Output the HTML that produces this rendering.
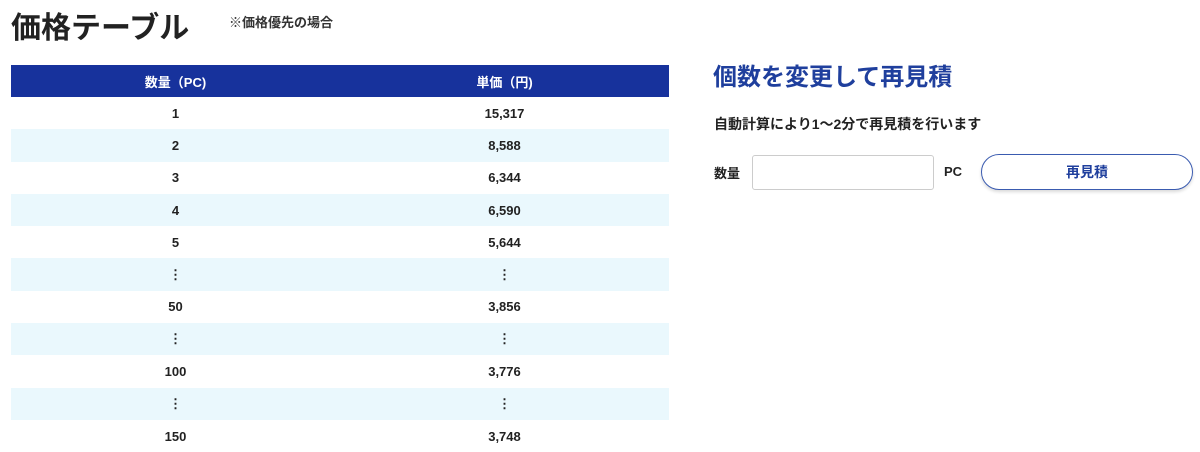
<!DOCTYPE html>
<html><head><meta charset="utf-8"><style>
body{margin:0;width:1200px;height:438px;overflow:hidden;background:#fff;font-family:"Liberation Sans","Noto Sans CJK JP",sans-serif;color:#222;position:relative}
.t{position:absolute;left:11px;top:3px;font-size:30px;font-weight:bold;color:#222}
.n{position:absolute;left:229px;top:12px;font-size:13px;font-weight:bold;color:#333}
table{position:absolute;left:11px;top:65px;width:658px;border-collapse:collapse;font-size:13px;font-weight:bold}
th{background:#17329c;color:#fff;height:32px;padding:0;font-size:13px;width:50%}
td{height:32.3px;text-align:center;padding:0;color:#222}
tr:nth-child(odd) td{background:#eaf8fd}
.h{position:absolute;left:713px;top:57px;font-size:24px;font-weight:bold;color:#1f3f9d}
.s{position:absolute;left:714px;top:114px;font-size:14px;font-weight:bold;color:#222}
.l{position:absolute;left:714px;top:163px;font-size:13px;font-weight:bold}
.i{position:absolute;left:752px;top:155px;width:180px;height:33px;border:1px solid #ccc;border-radius:3px}
.p{position:absolute;left:944px;top:164px;font-size:13px;font-weight:bold}
.b{position:absolute;left:981px;top:154px;width:210px;height:34px;border:1.5px solid #3a5bb0;border-radius:18px;text-align:center;line-height:34px;font-size:14px;font-weight:bold;color:#1f3f9d;box-shadow:0 2px 3px rgba(0,0,0,.15)}
</style></head><body>
<div class="t">価格テーブル</div>
<div class="n">※価格優先の場合</div>
<table>
<tr><th>数量（PC)</th><th>単価（円)</th></tr>
<tr><td>1</td><td>15,317</td></tr>
<tr><td>2</td><td>8,588</td></tr>
<tr><td>3</td><td>6,344</td></tr>
<tr><td>4</td><td>6,590</td></tr>
<tr><td>5</td><td>5,644</td></tr>
<tr><td>⋮</td><td>⋮</td></tr>
<tr><td>50</td><td>3,856</td></tr>
<tr><td>⋮</td><td>⋮</td></tr>
<tr><td>100</td><td>3,776</td></tr>
<tr><td>⋮</td><td>⋮</td></tr>
<tr><td>150</td><td>3,748</td></tr>
</table>
<div class="h">個数を変更して再見積</div>
<div class="s">自動計算により1～2分で再見積を行います</div>
<div class="l">数量</div>
<div class="i"></div>
<div class="p">PC</div>
<div class="b">再見積</div>
</body></html>
